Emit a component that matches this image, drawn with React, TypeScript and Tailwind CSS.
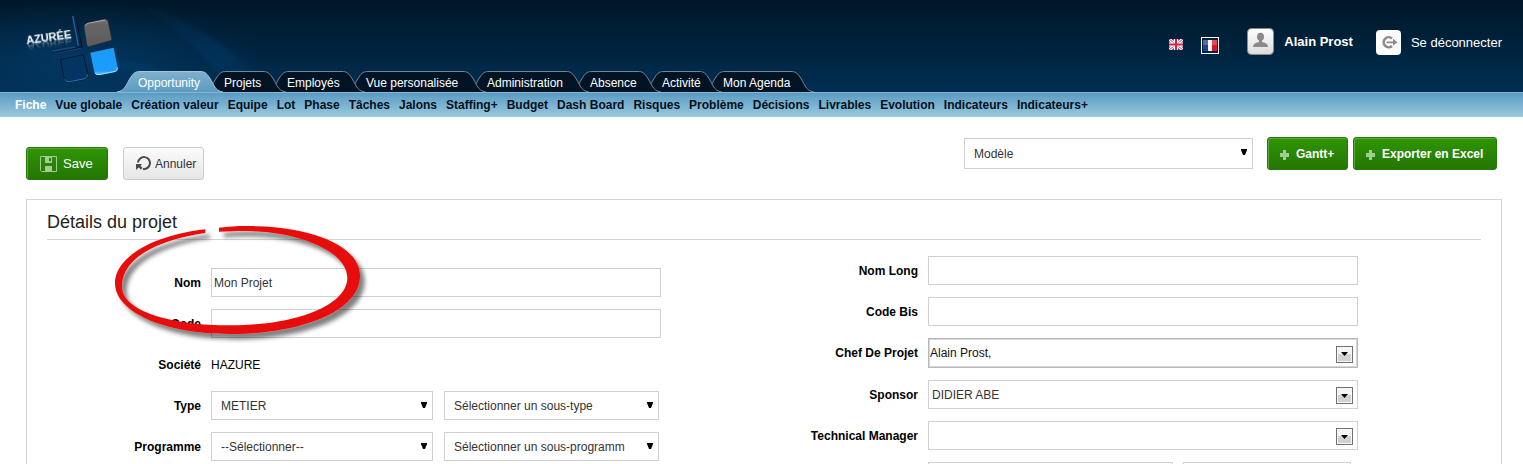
import React from "react";

const tabs = [
  { label: "Opportunity", width: 86, box: "w-[86px]" },
  { label: "Projets", width: 63, box: "w-[63px]" },
  { label: "Employés", width: 79, box: "w-[79px]" },
  { label: "Vue personalisée", width: 121, box: "w-[121px]" },
  { label: "Administration", width: 103, box: "w-[103px]" },
  { label: "Absence", width: 72, box: "w-[72px]" },
  { label: "Activité", width: 61, box: "w-[61px]" },
  { label: "Mon Agenda", width: 92, box: "w-[92px]" },
];

const sections = [
  "Fiche", "Vue globale", "Création valeur", "Equipe", "Lot", "Phase", "Tâches", "Jalons",
  "Staffing+", "Budget", "Dash Board", "Risques", "Problème", "Décisions", "Livrables",
  "Evolution", "Indicateurs", "Indicateurs+",
];

function TabShapes() {
  let x = 0;
  const shapes = tabs.map((tab, i) => {
    const start = x;
    const end = x + tab.width + 20;
    x += tab.width;
    const d = `M${start} 21 C${start + 9} 20 ${start + 10} 11 ${start + 14} 6 C${start + 17} 1.5 ${start + 19} .5 ${start + 23} .5 H${end - 23} C${end - 19} .5 ${end - 17} 1.5 ${end - 14} 6 C${end - 10} 11 ${end - 9} 20 ${end} 21`;
    return <path key={tab.label} d={d} fill={i === 0 ? "url(#activeTab)" : "#021424"} stroke={i === 0 ? "#a5c6da" : "#70879a"} />;
  });
  return (
    <svg className="pointer-events-none absolute bottom-0 left-0" width="700" height="21" aria-hidden="true">
      <defs>
        <linearGradient id="activeTab" x2="0" y2="1">
          <stop offset="0" stopColor="#7fb0cb" />
          <stop offset="1" stopColor="#5b9cc3" />
        </linearGradient>
      </defs>
      {shapes.reverse()}
    </svg>
  );
}

function Logo() {
  return (
    <div className="relative h-[70px] w-24" aria-label="Azurée">
      <svg className="absolute inset-0" width="96" height="72" viewBox="0 0 288 216" aria-hidden="true">
        <defs>
          <linearGradient id="greyTile" x2="0" y2="1"><stop offset="0" stopColor="#777" /><stop offset=".2" stopColor="#656565" /><stop offset="1" stopColor="#5b5b5b" /></linearGradient>
          <linearGradient id="blueTile" x2="0" y2="1"><stop offset="0" stopColor="#1c9af5" /><stop offset=".85" stopColor="#1b9dff" /><stop offset="1" stopColor="#70d0ff" /></linearGradient>
        </defs>
        <path d="M137 4 L150 2 L168 98 L82 119 L79 107 L155 91 Z" fill="#06284a" />
        <path d="M140 3 L157 92" stroke="#1f639f" strokeWidth="4" fill="none" />
        <path d="M149 3 L168 96 L82 117" stroke="#020f1e" strokeWidth="3" fill="none" />
        <path d="M80 108 L148 96" stroke="#174a7a" strokeWidth="4" />
        <path d="M82 117 L166 99" stroke="#1c5a91" strokeWidth="2" />
        <path d="M185 24 L233 13 Q244 10 247 22 L258 76 L188 95 Q184 95 182 89 L174 37 Q173 28 185 24Z" fill="url(#greyTile)" stroke="#252b31" strokeWidth="2" />
        <path d="M177 33 Q180 25 190 24 L237 15" stroke="#aaa" strokeWidth="3" fill="none" />
        <path d="M193 113 L263 98 L275 158 Q277 168 267 171 L219 180 Q208 182 205 171 Z" fill="url(#blueTile)" />
        <path d="M207 174 Q211 180 219 179 L268 169 Q275 165 274 158" stroke="#9be2ff" strokeWidth="3" fill="none" />
        <path d="M103 134 L172 119 L186 179 Q187 190 178 193 L130 201 Q119 203 115 192 Z" fill="#053462" stroke="#031c35" strokeWidth="3" />
        <path d="M116 193 Q120 202 130 200 L178 191 Q186 187 184 178" stroke="#2c70aa" strokeWidth="3" fill="none" />
      </svg>
      <span className="absolute top-4 left-0 -rotate-[8deg] text-[11px] leading-[12px] font-bold text-white [-webkit-box-reflect:below_-4px_linear-gradient(transparent_25%,rgba(255,255,255,.5))]">
        AZURÉE
      </span>
    </div>
  );
}

function BritishFlag() {
  return (
    <svg width="14" height="11" viewBox="0 0 28 22" aria-hidden="true">
      <path fill="#35539c" d="M0 0h28v22H0z" />
      <path d="M0 0 28 22M28 0 0 22" stroke="#fff" strokeWidth="6" />
      <path d="M0 0 28 22M28 0 0 22" stroke="#d8334a" strokeWidth="2" />
      <path d="M14 0V22M0 11H28" stroke="#fff" strokeWidth="8" />
      <path d="M14 0V22M0 11H28" stroke="#d8203c" strokeWidth="4" />
    </svg>
  );
}

function FrenchFlag() {
  return (
    <svg width="14" height="11" viewBox="0 0 14 11" aria-hidden="true">
      <path fill="#26408f" d="M0 0h5v11H0z" />
      <path fill="#f6f6f6" d="M5 0h4v11H5z" />
      <path fill="#d8162f" d="M9 0h5v11H9z" />
      <path fill="#fff" opacity=".22" d="M0 0h14v5H0z" />
    </svg>
  );
}

function PlusIcon() {
  return (
    <svg className="mt-[2px]" width="9" height="10" viewBox="0 0 9 10" aria-hidden="true">
      <path fill="#a3cb96" d="M3 0h3v3h3v4H6v3H3V7H0V3h3z" />
    </svg>
  );
}

function Select({ label, id, options, className }: { label?: string; id: string; options: string[]; className: string }) {
  return (
    <div className={`relative ${className}`}>
      <select id={id} aria-label={label} className="block h-full w-full appearance-none border border-[#d0d0d0] bg-white pr-6 pl-[9px] text-xs text-[#333]">
        {options.map((o) => <option key={o}>{o}</option>)}
      </select>
      <svg className="pointer-events-none absolute top-[11px] right-[6px]" width="6" height="6" viewBox="0 0 6 6" aria-hidden="true">
        <path d="M0 0h6v1L4 6H2L0 1z" fill="#000" />
      </svg>
    </div>
  );
}

function Row({ label, id, children }: { label: string; id: string; children: React.ReactNode }) {
  return (
    <div className="relative flex min-h-[29px] items-center gap-[10px]">
      <label htmlFor={id} className="w-[154px] shrink-0 text-right text-xs font-bold text-black">{label}</label>
      <div className="flex min-w-0 flex-1 gap-[11px]">{children}</div>
    </div>
  );
}

function TextField({ id, value = "" }: { id: string; value?: string }) {
  return <input id={id} defaultValue={value} className="h-[29px] w-full border border-[#d0d0d0] bg-white px-[2px] text-xs text-[#333]" />;
}

function Combo({ id, value, className }: { id: string; value: string; className: string }) {
  return (
    <div className={`flex w-full items-center border bg-white pr-1 ${className}`}>
      <input id={id} defaultValue={value} className="min-w-0 flex-1 self-stretch text-xs" />
      <button type="button" aria-label="Ouvrir la liste" className="mt-[2px] flex h-[17px] w-[17px] items-center justify-center border border-[#707070] bg-linear-to-b from-[#f4f4f4] from-50% to-[#d2d2d2] to-50% shadow-[inset_0_0_0_1px_#f8f8f8]">
        <svg width="7" height="4" viewBox="0 0 7 4" aria-hidden="true"><path d="M0 0h7L3.500 4z" /></svg>
      </button>
    </div>
  );
}

function Highlight() {
  return (
    <svg className="pointer-events-none absolute -top-[53px] left-[53px] z-10 overflow-visible" width="280" height="140" viewBox="0 0 840 420" aria-hidden="true">
      <defs>
        <filter id="ringShadow" x="-10%" y="-10%" width="120%" height="130%">
          <feDropShadow dx="14" dy="16" stdDeviation="6" floodColor="#000" floodOpacity=".5" />
        </filter>
      </defs>
      <path filter="url(#ringShadow)" fill="#e8100c" d="M316 43C150 62 45 130 45 205C45 290 190 357 390 357C600 357 780 290 780 182C780 95 640 33 440 33C410 33 385 35 357 38V50C385 49 410 48 440 48C600 50 742 110 742 188C742 270 590 331 390 331C220 331 66 290 66 215C66 130 170 75 316 54Z" />
    </svg>
  );
}

const green = "flex h-[33px] items-center rounded-[3px] border border-[#257a05] bg-linear-to-b from-[#2f9604] to-[#247603] text-white shadow-[inset_1px_1px_0_#58a83a]";

export default function App() {
  return (
    <div className="h-screen overflow-y-auto bg-white font-['Liberation_Sans',Arial,sans-serif] [scrollbar-width:none]">
      <header>
        <div className="relative flex h-[93px] justify-between overflow-hidden border-b border-[#86b5cf] bg-linear-to-b from-[#001728] to-[#002e53]">
          <svg className="pointer-events-none absolute inset-0" width="340" height="92" aria-hidden="true">
            <defs>
              <linearGradient id="ray" x2="1" y2="1"><stop offset="0" stopColor="#075091" stopOpacity="0" /><stop offset=".6" stopColor="#075091" stopOpacity=".22" /><stop offset="1" stopColor="#075091" stopOpacity="0" /></linearGradient>
              <radialGradient id="glow"><stop offset="0" stopColor="#064173" stopOpacity=".6" /><stop offset="1" stopColor="#064173" stopOpacity="0" /></radialGradient>
              <filter id="soften"><feGaussianBlur stdDeviation="2" /></filter>
            </defs>
            <ellipse cx="75" cy="60" rx="190" ry="60" fill="url(#glow)" />
            <path filter="url(#soften)" d="M130 0 Q220 30 275 92 H235 Q190 35 130 0Z" fill="url(#ray)" />
            <path filter="url(#soften)" d="M0 48 Q95 45 240 92 H190 Q100 55 0 53Z" fill="url(#ray)" />
          </svg>
          <div className="relative flex">
            <div className="w-[117px] shrink-0 pt-[15px] pl-[26px]"><Logo /></div>
            <nav aria-label="Modules" className="relative flex items-end pl-[21px]">
              <TabShapes />
              {tabs.map((tab) => (
                <a key={tab.label} href="#" className={`relative h-[21px] shrink-0 pt-[3px] text-xs leading-[18px] whitespace-nowrap text-white ${tab.box}`}>{tab.label}</a>
              ))}
            </nav>
          </div>
          <div className="relative flex items-start pt-[28px] pr-[21px] text-[13px] text-white">
            <a href="#" aria-label="English" className="mt-[11px]"><BritishFlag /></a>
            <a href="#" aria-label="Français" className="mt-[9px] ml-[18px] border border-white px-[1px] py-[2px]"><FrenchFlag /></a>
            <a href="#" className="ml-[28px] flex items-center gap-[10px] font-bold">
              <svg width="27" height="27" viewBox="0 0 27 27" aria-hidden="true">
                <defs><linearGradient id="avatar" x2="0" y2="1"><stop offset="0" stopColor="#fff" /><stop offset="1" stopColor="#dcdcdc" /></linearGradient></defs>
                <rect x=".5" y=".5" width="26" height="26" rx="4" fill="url(#avatar)" stroke="#8b8b8b" />
                <ellipse cx="13.500" cy="8.700" rx="3.500" ry="4" fill="#8a8a8a" />
                <path d="M12 11h3v3q6 1 6 5H6q0-4 6-5z" fill="#8a8a8a" />
              </svg>
              Alain Prost
            </a>
            <a href="#" className="mt-[2px] ml-[23px] flex items-center gap-[10px]">
              <svg width="25" height="25" viewBox="0 0 25 25" aria-hidden="true">
                <rect width="25" height="25" rx="4" fill="#fdfdfd" />
                <path d="M16 8.500A5 5 0 1 0 16 16" fill="none" stroke="#8c8c8c" strokeWidth="2.600" />
                <path d="M10.500 11.400H17V8.800L21.500 12.300L17 15.800V13.200H10.500z" fill="#8c8c8c" />
              </svg>
              Se déconnecter
            </a>
          </div>
        </div>
        <nav aria-label="Sections" className="flex h-6 items-center gap-[9px] overflow-hidden bg-linear-to-b from-[#5a9bc3] to-[#9acadd] pl-[15px] text-xs font-bold whitespace-nowrap">
          {sections.map((s, i) => <a key={s} href="#" className={i === 0 ? "text-white" : "text-[#04101c]"}>{s}</a>)}
        </nav>
      </header>

      <main className="pt-5 pr-[21px] pl-[26px]">
        <div className="flex items-start justify-between pr-[5px]">
          <div className="flex gap-[15px] pt-[10px]">
            <button type="button" className={`${green} w-[82px] gap-[6px] pl-[13px] text-[13px] font-medium`}>
              <svg width="17" height="16" viewBox="0 0 17 16" aria-hidden="true">
                <path d="M.5 .5h16v15H1.500l-1-1z" fill="none" stroke="#a3cb96" />
                <path d="M5 1h7v6H5zM5 10h7v6H5z" fill="#a3cb96" /><path d="M9 2h2v3H9z" fill="#298404" />
              </svg>
              Save
            </button>
            <button type="button" className="flex h-[33px] w-[81px] items-center gap-[3px] rounded-[3px] border border-[#ccc] bg-linear-to-b from-[#fbfbfb] to-[#e6e6e6] pl-3 text-xs text-[#333]">
              <svg width="16" height="15" viewBox="0 0 16 15" aria-hidden="true">
                <path d="M2 6.500A6 6 0 1 1 7 13" fill="none" stroke="#4a4a4a" strokeWidth="2" />
                <path d="M0 8h6L4.500 9.800L6.500 12L5 13.500L2.500 11.500L0 14z" fill="#4a4a4a" />
              </svg>
              Annuler
            </button>
          </div>
          <div className="flex items-start">
            <Select id="modele" label="Modèle" options={["Modèle"]} className="mt-px h-[31px] w-[289px]" />
            <button type="button" className={`${green} ml-[14px] w-[81px] gap-[7px] pl-3 text-xs font-bold`}><PlusIcon />Gantt+</button>
            <button type="button" className={`${green} ml-[5px] w-36 gap-[7px] pl-3 text-xs font-bold`}><PlusIcon />Exporter en Excel</button>
          </div>
        </div>

        <section className="mt-[19px] border border-[#d5d5d5] px-5 pb-6">
          <h1 className="h-10 border-b border-[#d5d5d5] pt-[9px] text-lg leading-[26px] text-[#222]">Détails du projet</h1>
          <form className="grid grid-cols-2">
            <div className="flex flex-col gap-3 pt-7 pr-[103px]">
              <div className="relative">
                <Row label="Nom" id="nom"><TextField id="nom" value="Mon Projet" /></Row>
                <Highlight />
              </div>
              <Row label="Code" id="code"><TextField id="code" /></Row>
              <Row label="Société" id="societe"><output id="societe" className="text-xs text-black">HAZURE</output></Row>
              <Row label="Type" id="type">
                <Select id="type" options={["METIER"]} className="h-[29px] flex-[222]" />
                <Select id="sous-type" label="Sous-type" options={["Sélectionner un sous-type"]} className="mr-[2px] h-[29px] flex-[215]" />
              </Row>
              <Row label="Programme" id="programme">
                <Select id="programme" options={["--Sélectionner--"]} className="h-[29px] flex-[222]" />
                <Select id="sous-programme" label="Sous-programme" options={["Sélectionner un sous-programm"]} className="mr-[2px] h-[29px] flex-[215]" />
              </Row>
            </div>
            <div className="flex flex-col gap-3 pt-4 pr-[123px]">
              <Row label="Nom Long" id="nom-long"><TextField id="nom-long" /></Row>
              <Row label="Code Bis" id="code-bis"><TextField id="code-bis" /></Row>
              <Row label="Chef De Projet" id="chef"><Combo id="chef" value="Alain Prost," className="h-[30px] border-[#b8b8b8] pl-px text-[#111] shadow-[inset_0_0_0_1px_#d5d5d5]" /></Row>
              <Row label="Sponsor" id="sponsor"><Combo id="sponsor" value="DIDIER ABE" className="h-[29px] border-[#d0d0d0] pl-[3px] text-[#333]" /></Row>
              <Row label="Technical Manager" id="technical"><Combo id="technical" value="" className="h-[29px] border-[#d0d0d0] text-[#333]" /></Row>
              <div className="flex gap-[10px] pr-[7px] pl-[164px]">
                <input aria-label="Champ 1" className="h-[29px] min-w-0 flex-[245] border border-[#d0d0d0]" />
                <input aria-label="Champ 2" className="h-[29px] min-w-0 flex-[168] border border-[#d0d0d0]" />
              </div>
            </div>
          </form>
        </section>
      </main>
    </div>
  );
}
